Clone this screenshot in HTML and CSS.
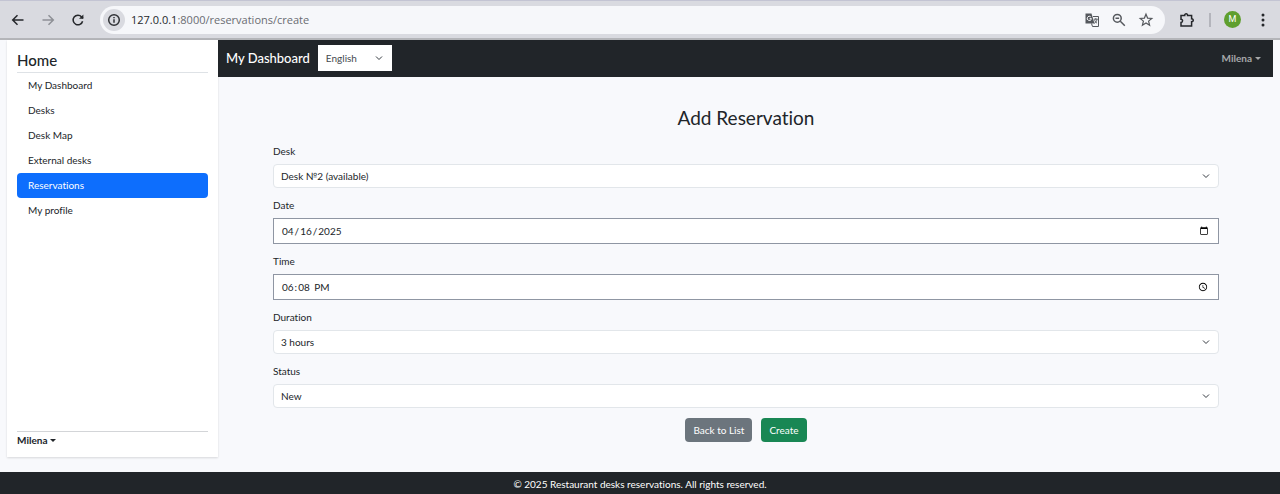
FILE: index.html
```html
<!DOCTYPE html>
<html lang="en-US">
<head>
<meta charset="utf-8">
<meta name="viewport" content="width=device-width, initial-scale=1">
<title>Add Reservation</title>
<link rel="stylesheet" href="styles.css">
</head>
<body>
<header class="browser">
  <button class="tool" aria-label="Back"><svg viewBox="0 0 16 16"><path d="M13.5 8H3M7.5 3.2 2.7 8l4.8 4.8"/></svg></button>
  <button class="tool tool-off" aria-label="Forward" disabled><svg viewBox="0 0 16 16"><path d="M2.5 8H13M8.5 3.2 13.3 8l-4.8 4.8"/></svg></button>
  <button class="tool" aria-label="Reload"><svg viewBox="0 0 16 16"><path d="M12.6 9.2A4.8 4.8 0 1 1 11.6 4.9L13 6.2"/><path class="solid" d="M13.4 2.4v4.4H9z"/></svg></button>
  <div class="address">
    <button class="info" aria-label="Site information"><svg viewBox="0 0 16 16"><circle cx="8" cy="8" r="5.3"/><path d="M8 7.3v3.5M8 4.9v1.4"/></svg></button>
    <span class="url"><span class="host">127.0.0.1</span>:8000/reservations/create</span>
    <button class="tool" aria-label="Translate"><svg viewBox="0 0 16 16"><path class="solid" d="M1.500 1.500h6l3 10h-9z"/><path class="thin" d="M9 4.500h5.500v10H8.500l-1-3"/><path class="thin" d="M9.800 7.200h4M11.800 6.200v1M13 7.500c-.4 1.800-1.400 3-2.600 3.800M10.700 8.200c.5 1.500 1.300 2.400 2.300 3"/><path class="knock" d="M6.800 4.900a2.100 2.100 0 1 0 .6 1.700H5.600"/></svg></button>
    <button class="tool" aria-label="Zoom"><svg viewBox="0 0 16 16"><circle cx="6.300" cy="6.300" r="3.900"/><path d="m9.300 9.300 4.500 4.500M4.500 6.300h3.600"/></svg></button>
    <button class="tool" aria-label="Bookmark"><svg viewBox="0 0 16 16"><path class="line" d="m8 2.200 1.600 3.900 4.200.3-3.200 2.700 1 4.100L8 11l-3.600 2.200 1-4.100-3.200-2.700 4.200-.3z"/></svg></button>
  </div>
  <button class="tool extensions" aria-label="Extensions"><svg viewBox="0 0 16 16"><path d="M2 3.500h3.700c-.3-2.200 3.200-2.200 2.900 0h4v3.300c2.200-.3 2.200 3.200 0 2.900v4.300H2v-3.500c2.100 0 2.100-3.300 0-3.300z"/></svg></button>
  <span class="divider"></span>
  <button class="avatar" aria-label="Profile">M</button>
  <button class="tool" aria-label="Menu"><svg viewBox="0 0 16 16"><g class="solid"><circle cx="8" cy="3" r="1.500"/><circle cx="8" cy="8" r="1.500"/><circle cx="8" cy="13" r="1.500"/></g></svg></button>
</header>
<div class="shell">
  <aside class="sidebar">
    <h2 class="brand">Home</h2>
    <nav class="menu">
      <a href="#">My Dashboard</a>
      <a href="#">Desks</a>
      <a href="#">Desk Map</a>
      <a href="#">External desks</a>
      <a href="#" class="active" aria-current="page">Reservations</a>
      <a href="#">My profile</a>
    </nav>
    <div class="account"><button class="dropdown">Milena</button></div>
  </aside>
  <div class="content">
    <nav class="navbar">
      <a class="title" href="#">My Dashboard</a>
      <select class="language" aria-label="Language"><option>English</option></select>
      <button class="dropdown user">Milena</button>
    </nav>
    <main class="main">
      <h1 class="heading">Add Reservation</h1>
      <form class="form">
        <label for="desk">Desk</label>
        <select id="desk" class="select"><option>Desk №2 (available)</option></select>
        <label for="date">Date</label>
        <input id="date" class="input" type="date" value="2025-04-16">
        <label for="time">Time</label>
        <input id="time" class="input" type="time" value="18:08">
        <label for="duration">Duration</label>
        <select id="duration" class="select"><option>3 hours</option></select>
        <label for="status">Status</label>
        <select id="status" class="select"><option>New</option></select>
        <div class="actions">
          <a class="btn secondary" href="#">Back to List</a>
          <button class="btn success" type="submit">Create</button>
        </div>
      </form>
    </main>
  </div>
</div>
<footer class="footer">© 2025 Restaurant desks reservations. All rights reserved.</footer>
</body>
</html>
```
FILE: styles.css
```css
* { box-sizing: border-box; }
body {
  margin: 0;
  min-height: 100vh;
  display: flex;
  flex-direction: column;
  background: #f8f9fc;
  color: #212529;
  font: 10px/16px Lato, "Noto Sans", sans-serif;
  font-variant-ligatures: none;
}
button, input, select { font: inherit; font-variant-ligatures: none; color: inherit; }
button { border: 0; padding: 0; background: none; }
a { color: inherit; text-decoration: none; }
h1, h2 { margin: 0; font-weight: 500; }

.browser {
  display: flex;
  align-items: center;
  height: 40px;
  padding: 0 9px 0 10px;
  background: #d9dae0;
  border-top: 1px solid #c3c4d3;
  border-bottom: 2px solid #b4b5b9;
}
.tool { display: grid; place-items: center; width: 16px; height: 16px; margin-right: 14px; color: #25272b; }
.tool svg { width: 16px; height: 16px; }
svg { fill: none; stroke: currentColor; stroke-width: 1.500; }
.solid { fill: currentColor; stroke: none; }
.thin { stroke-width: 1; }
.line { stroke-width: 1.200; }
.knock { stroke: #f6f7fa; stroke-width: 1; }
.tool-off { color: #8e9096; }
.address {
  flex: 1;
  display: flex;
  align-items: center;
  height: 28px;
  padding: 0 11px 0 3px;
  border-radius: 14px;
  background: #f6f7fa;
}
.address .tool { margin: 0 0 0 11px; color: #55585d; }
.info { display: grid; place-items: center; width: 22px; height: 22px; border-radius: 50%; background: #d9dae0; color: #303236; }
.info svg { width: 16px; height: 16px; }
.url { flex: 1; padding-left: 6px; font: 11px/16px "Open Sans", sans-serif; color: #6a6c72; }
.host { color: #25272b; }
.extensions { margin: 0 14px; }
.divider { width: 2px; height: 14px; background: #b4b5bc; }
.avatar {
  width: 17px;
  height: 17px;
  margin: 0 14px 0 13px;
  border-radius: 50%;
  background: #5f9f2e;
  color: #fff;
  font: 9px/17px Roboto, sans-serif;
}
.avatar + .tool { margin: 0; }

.shell { flex: 1; display: flex; padding: 0 7px; }
.sidebar {
  flex: 0 0 211px;
  display: flex;
  flex-direction: column;
  margin-bottom: 15px;
  padding: 9px 10px;
  background: #fff;
  box-shadow: 0 1px 2px #0002;
}
.brand { border-bottom: 1px solid #dee2e6; font-size: 15px; line-height: 23px; }
.menu { display: flex; flex-direction: column; }
.menu a { padding: 4px 11px 5px; border-radius: 4px; }
.menu .active { background: #0d6efd; color: #fff; }
.account { margin-top: auto; border-top: 1px solid #d3d5d8; }
.dropdown { display: flex; align-items: center; gap: 3px; font-weight: 700; }
.dropdown::after { content: ""; border: solid transparent; border-width: 3px 3px 0; border-top-color: currentColor; }
.content { flex: 1; min-width: 0; }
.navbar { display: flex; align-items: center; height: 37px; padding: 0 12px 1px 8px; background: #212529; color: #fff; }
.title { font-size: 13px; font-weight: 500; margin-right: 8px; }
.language, .select {
  appearance: none;
  background: #fff url("data:image/svg+xml,%3Csvg xmlns='http://www.w3.org/2000/svg' viewBox='0 0 16 16' fill='none' stroke='%23343a40' stroke-width='2'%3E%3Cpath d='m2 5 6 6 6-6'/%3E%3C/svg%3E") no-repeat right 8px center / 8px;
}
.language { width: 74px; height: 26px; padding: 0 7px; border: 1px solid #fff; border-radius: 0; color: #444950; }
.user { margin-left: auto; color: #a6a8a9; }

.main { padding: 28px 54px 0 55px; }
.heading { text-align: center; font-size: 19px; line-height: 26px; font-weight: 400; }
.form { display: flex; flex-direction: column; padding-top: 12px; }
.form label { margin-bottom: 5px; }
.select, .input { width: 100%; margin-bottom: 9px; padding: 0 7px; background-color: #fff; }
.select { height: 24px; border: 1px solid #e2e6ea; border-radius: 4px; }
.input { height: 26px; border: 1px solid #8f96a3; }
.actions { display: flex; justify-content: center; gap: 9px; margin-top: 1px; }
.btn { padding: 4px 8px; border-radius: 4px; color: #fff; }
.secondary { background: #6c757d; }
.success { background: #198754; }
.footer { padding: 4px 0 2px; background: #212529; color: #fff; text-align: center; }
```
